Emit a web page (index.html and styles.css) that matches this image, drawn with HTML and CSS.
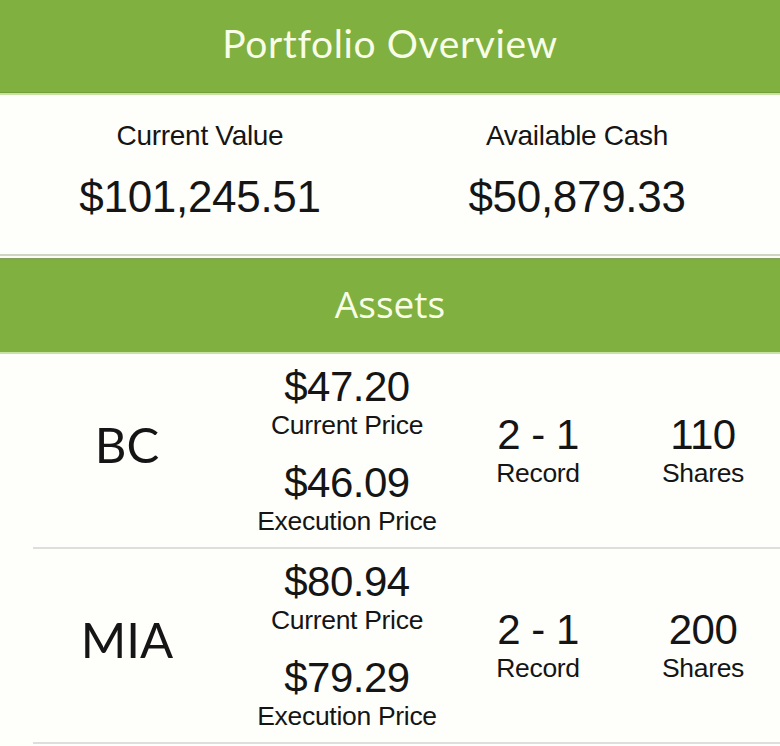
FILE: index.html
```html
<!DOCTYPE html>
<html>
<head>
<meta charset="utf-8">
<link rel="stylesheet" href="styles.css">
</head>
<body>
<div class="page">
  <header class="band band-top"><h1 class="band-title title-overview">Portfolio Overview</h1></header>
  <section class="summary">
    <div class="stat">
      <div class="stat-label">Current Value</div>
      <div class="stat-value">$101,245.51</div>
    </div>
    <div class="stat">
      <div class="stat-label">Available Cash</div>
      <div class="stat-value">$50,879.33</div>
    </div>
  </section>
  <div class="rule-pair"></div>
  <header class="band band-assets"><h2 class="band-title title-assets">Assets</h2></header>
  <section class="assets">
    <div class="asset">
      <div class="ticker">BC</div>
      <div class="prices">
        <div class="num">$47.20</div>
        <div class="lbl">Current Price</div>
        <div class="num num-gap">$46.09</div>
        <div class="lbl">Execution Price</div>
      </div>
      <div class="metric">
        <div class="mnum">2 - 1</div>
        <div class="mlbl">Record</div>
      </div>
      <div class="metric">
        <div class="mnum">110</div>
        <div class="mlbl">Shares</div>
      </div>
    </div>
    <div class="asset">
      <div class="ticker">MIA</div>
      <div class="prices">
        <div class="num">$80.94</div>
        <div class="lbl">Current Price</div>
        <div class="num num-gap">$79.29</div>
        <div class="lbl">Execution Price</div>
      </div>
      <div class="metric">
        <div class="mnum">2 - 1</div>
        <div class="mlbl">Record</div>
      </div>
      <div class="metric">
        <div class="mnum">200</div>
        <div class="mlbl">Shares</div>
      </div>
    </div>
  </section>
</div>
</body>
</html>
```
FILE: styles.css
```css
html, body {
  margin: 0;
  padding: 0;
  background: #fefffb;
}
.page {
  width: 780px;
  color: #151515;
  font-family: "Liberation Sans", Arial, sans-serif;
}
.band {
  background: #7fb040;
  display: flex;
  align-items: center;
  justify-content: center;
  box-sizing: border-box;
}
.band-top {
  height: 95px;
  border-bottom: 2px solid #c8e2a4;
  box-shadow: inset 0 -1px 0 #74a03a;
}
.band-assets {
  height: 96px;
  border-top: 2px solid #86a05e;
  border-bottom: 2px solid #c8e2a4;
}
.band-title {
  margin: 0;
  color: #f8fde8;
  font-weight: 400;
}
.title-overview {
  font-family: Lato, "Open Sans", sans-serif;
  font-size: 39px;
  letter-spacing: 0.6px;
  margin-top: -8px;
}
.title-assets {
  font-family: "Open Sans", sans-serif;
  font-size: 37px;
  margin-top: -6px;
}
.summary {
  display: grid;
  grid-template-columns: 380px 1fr;
  padding: 25px 16px 0 10px;
  height: 159px;
  box-sizing: border-box;
}
.stat {
  text-align: center;
}
.stat-label {
  font-size: 28px;
  line-height: 32px;
  letter-spacing: -0.3px;
}
.stat-value {
  font-size: 44px;
  line-height: 50px;
  margin-top: 20px;
  letter-spacing: -0.3px;
}
.rule-pair {
  height: 2px;
  background: #d0d4c2;
  border-bottom: 2px solid #fbfdf4;
}
.asset {
  display: grid;
  grid-template-columns: 221px 186px 196px 1fr;
  align-items: center;
  height: 195px;
  box-sizing: border-box;
  margin-left: 33px;
  padding-right: 10px;
  border-bottom: 2px solid #dedede;
}
.ticker {
  margin-left: -33px;
  font-family: Lato, "Open Sans", sans-serif;
  font-size: 49px;
  text-align: center;
  margin-top: -14px;
}
.prices,
.metric {
  text-align: center;
}
.num {
  font-size: 42px;
  line-height: 44px;
  letter-spacing: -0.5px;
}
.num-gap {
  margin-top: 20px;
}
.lbl {
  font-size: 26.5px;
  line-height: 32px;
  letter-spacing: -0.3px;
}
.mnum {
  font-size: 42px;
  line-height: 46px;
  letter-spacing: -0.5px;
}
.mlbl {
  font-size: 26.5px;
  line-height: 31px;
  letter-spacing: -0.3px;
}
```
